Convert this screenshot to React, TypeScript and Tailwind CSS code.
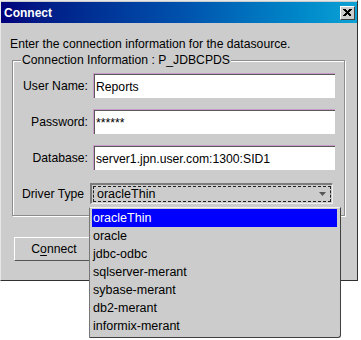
import React from 'react';

const drivers = ['oracleThin', 'oracle', 'jdbc-odbc', 'sqlserver-merant', 'sybase-merant', 'db2-merant', 'informix-merant'];

const fields = [
  { label: 'User Name:', value: 'Reports' },
  { label: 'Password:', value: '******' },
  { label: 'Database:', value: 'server1.jpn.user.com:1300:SID1' },
];

function Field({ label, value }: { label: string; value: string }) {
  return (
    <div className="flex items-center h-[25px]">
      <span className="w-[73px] text-right whitespace-nowrap">{label}</span>
      <div className="ml-[5px] w-[242px] h-[25px] bg-white border-t border-l border-t-[#c89ac8] border-l-[#c89ac8] flex">
        <div className="flex-1 border-t border-l border-[#5a5a5a] flex items-center pl-[1px]">{value}</div>
      </div>
    </div>
  );
}

export default function App() {
  return (
    <div className="relative w-[361px] h-[340px] bg-white text-black text-[12.2px] leading-none" style={{ fontFamily: '"Liberation Sans", Arial, sans-serif' }}>
      <div className="w-[358px] h-[281px] bg-[#cccccc] border-t border-l border-[#e8e8e8] border-r border-b border-r-[#303030] border-b-[#303030] flex flex-col">
        <div className="h-[21px] mt-[1px] flex items-center justify-between pl-[3px] pr-[2px] bg-gradient-to-r from-[#00007c] via-[#0050ac] to-[#0ea2d6]">
          <span className="text-white font-bold text-[12px]">Connect</span>
          <div className="w-[15px] h-[14px] bg-[#cccccc] border-t border-l border-white border-r border-b border-r-[#404040] border-b-[#404040] flex items-center justify-center">
            <svg width="9" height="8" viewBox="0 0 9 8">
              <path d="M1 0 L8 7 M2 0 L8 6 M0 0 L7 7 M8 0 L1 7 M7 0 L0 7 M9 0 L2 7" stroke="black" strokeWidth="1" />
            </svg>
          </div>
        </div>

        <p className="mt-[15px] ml-[9px]">Enter the connection information for the datasource.</p>

        <div className="relative mt-[10px] ml-[11px] w-[333px] h-[156px] border border-[#8c8c8c] shadow-[inset_1px_1px_0_#ffffff,1px_1px_0_#ffffff]">
          <span className="absolute -top-[7px] left-[8px] px-[1px] bg-[#cccccc]">Connection Information : P_JDBCPDS</span>
          <div className="flex flex-col gap-[11px] pt-[12px] pl-[2px]">
            {fields.map((f) => (
              <Field key={f.label} label={f.label} value={f.value} />
            ))}
            <div className="flex items-center h-[21px] mt-[2px]">
              <span className="w-[69px] pl-[7px] whitespace-nowrap">Driver Type</span>
              <div className="ml-[6px] w-[243px] h-[21px] border-t-2 border-l-2 border-[#7a7a7a] border-r border-b border-r-[#eeeeee] border-b-[#eeeeee] rounded-tr-[2px] p-[1px]">
                <div className="h-full border border-dashed border-[#202020] flex items-center justify-between pl-[3px] pr-[4px]">
                  <span className="text-[12.5px]">oracleThin</span>
                  <svg width="7" height="4" viewBox="0 0 7 4">
                    <path d="M0 0 H7 L3.5 4 Z" fill="#555555" />
                  </svg>
                </div>
              </div>
            </div>
          </div>
        </div>

        <div className="mt-[21px] ml-[13px] w-[80px] h-[24px] border-t border-l border-white border-r border-b border-r-[#555555] border-b-[#555555] flex items-center justify-center">
          <span>
            C<span className="underline underline-offset-2">o</span>nnect
          </span>
        </div>
      </div>

      <div className="absolute left-[89px] top-[207px] w-[252px] h-[131px] bg-[#cccccc] border-t border-l border-t-[#f0f0f0] border-l-[#777777] border-r border-b border-[#404040] rounded-br-[3px] pt-[1px] pl-[2px] pr-[3px]">
        {drivers.map((d, i) => (
          <div
            key={d}
            className={`h-[18px] flex items-center pl-[1px] text-[12.5px] ${i === 0 ? 'bg-[#0000ff] text-white' : ''}`}
          >
            {d}
          </div>
        ))}
      </div>
    </div>
  );
}
